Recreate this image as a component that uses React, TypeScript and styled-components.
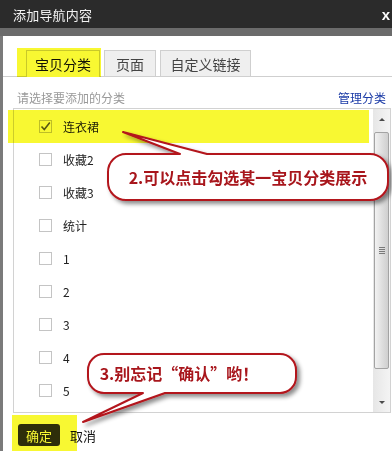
import React from "react";
import styled, { createGlobalStyle } from "styled-components";

const GlobalStyle = createGlobalStyle`
  html, body { margin: 0; padding: 0; background: #fff; }
  body { font-family: "Noto Sans CJK SC", "Noto Sans", "Liberation Sans", sans-serif; }
`;

const Frame = styled.div`
  position: relative;
  width: 392px;
  height: 451px;
  overflow: hidden;
  background: #7a7a7a;
  display: flex;
  flex-direction: column;
`;

const TitleBar = styled.div`
  height: 28px;
  flex: none;
  background: #2b2b2b;
  display: flex;
  align-items: center;
  justify-content: space-between;
  padding: 0 2px 0 13px;
  color: #f2f2f2;
`;

const Title = styled.span`
  font-size: 13px;
  letter-spacing: 0.2px;
`;

const Close = styled.span`
  font-family: "Liberation Sans", sans-serif;
  font-weight: bold;
  font-size: 15px;
  color: #fff;
  line-height: 1;
  margin-top: 1px;
`;

const SubBar = styled.div`
  height: 8px;
  flex: none;
  background: #6b6b6b;
`;

const Panel = styled.div`
  flex: 1;
  margin-left: 3px;
  background: #fff;
  display: flex;
  flex-direction: column;
  padding-top: 14px;
`;

const TabBar = styled.div`
  display: flex;
  gap: 4px;
  padding-left: 23px;
  border-bottom: 1px solid #cfcfcf;
  height: 26px;
`;

const Tab = styled.div<{ $active?: boolean; $w: number }>`
  width: ${(p) => p.$w}px;
  box-sizing: border-box;
  border: 1px solid #cfcfcf;
  border-bottom: none;
  background: ${(p) => (p.$active ? "#fff" : "#efefef")};
  color: ${(p) => (p.$active ? "#111" : "#444")};
  font-size: 14px;
  display: flex;
  align-items: center;
  justify-content: center;
  margin-bottom: ${(p) => (p.$active ? "-1px" : "0")};
  height: ${(p) => (p.$active ? "27px" : "26px")};
`;

const HintRow = styled.div`
  display: flex;
  justify-content: space-between;
  align-items: center;
  height: 17px;
  padding: 12px 6px 0 14px;
  margin-bottom: 2px;
  font-size: 12px;
`;

const Hint = styled.span`
  color: #999;
`;

const Manage = styled.span`
  color: #1a3aa6;
`;

const ListBox = styled.div`
  height: 305px;
  box-sizing: border-box;
  margin: 0 1px 0 10px;
  border: 1px solid #d2d2d2;
  display: flex;
`;

const List = styled.div`
  flex: 1;
  padding-top: 1px;
  display: flex;
  flex-direction: column;
`;

const Row = styled.div`
  height: 33px;
  flex: none;
  display: flex;
  align-items: center;
  gap: 11px;
  padding-left: 25px;
  font-size: 12px;
  color: #222;
`;

const Box = styled.span`
  width: 13px;
  height: 13px;
  box-sizing: border-box;
  border: 1px solid #c4c4c4;
  background: #fff;
  display: flex;
  align-items: center;
  justify-content: center;
`;

const Scrollbar = styled.div`
  width: 17px;
  flex: none;
  background: linear-gradient(to right, #e6e6e6, #f4f4f4);
  display: flex;
  flex-direction: column;
  align-items: center;
`;

const Arrow = styled.div<{ $down?: boolean }>`
  height: 20px;
  width: 17px;
  display: flex;
  align-items: center;
  justify-content: center;
  &::before {
    content: "";
    width: 0;
    height: 0;
    border-left: 3px solid transparent;
    border-right: 3px solid transparent;
    ${(p) =>
      p.$down ? "border-top: 3px solid #4a4a4a;" : "border-bottom: 3px solid #4a4a4a;"}
  }
`;

const Track = styled.div`
  flex: 1;
  width: 17px;
  display: flex;
  flex-direction: column;
  padding: 3px 0 20px;
  box-sizing: border-box;
`;

const Thumb = styled.div`
  height: 237px;
  width: 15px;
  margin-left: 1px;
  box-sizing: border-box;
  border: 1px solid #a3a3a3;
  border-radius: 2px;
  background: linear-gradient(to right, #f2f2f2, #dcdcdc 60%, #cfcfcf);
  display: flex;
  flex-direction: column;
  align-items: center;
  justify-content: center;
  gap: 1px;
`;

const Grip = styled.span`
  width: 6px;
  height: 1px;
  background: #7a7a7a;
`;

const Footer = styled.div`
  display: flex;
  align-items: center;
  gap: 10px;
  padding: 11px 0 0 15px;
`;

const OkButton = styled.div`
  width: 42px;
  height: 22px;
  border-radius: 3px;
  background: #2f2f2f;
  color: #fff;
  font-size: 13px;
  display: flex;
  align-items: center;
  justify-content: center;
`;

const Cancel = styled.span`
  font-size: 13px;
  color: #111;
`;

const Highlight = styled.div<{ $x: number; $y: number; $w: number; $h: number }>`
  position: absolute;
  left: ${(p) => p.$x}px;
  top: ${(p) => p.$y}px;
  width: ${(p) => p.$w}px;
  height: ${(p) => p.$h}px;
  background: #f8f832;
  mix-blend-mode: multiply;
  pointer-events: none;
`;

const Overlay = styled.svg`
  position: absolute;
  left: 0;
  top: 0;
  pointer-events: none;
`;

const CalloutText = styled.div<{ $x: number; $y: number; $w: number; $h: number }>`
  position: absolute;
  left: ${(p) => p.$x}px;
  top: ${(p) => p.$y}px;
  width: ${(p) => p.$w}px;
  height: ${(p) => p.$h}px;
  display: flex;
  align-items: center;
  justify-content: center;
  font-weight: bold;
  font-size: 16px;
  color: #a8161c;
  white-space: nowrap;
`;

const items = ["连衣裙", "收藏2", "收藏3", "统计", "1", "2", "3", "4", "5"];

export default function App() {
  return (
    <>
      <GlobalStyle />
      <Frame>
        <TitleBar>
          <Title>添加导航内容</Title>
          <Close>x</Close>
        </TitleBar>
        <SubBar />
        <Panel>
          <TabBar>
            <Tab $active $w={74}>宝贝分类</Tab>
            <Tab $w={52}>页面</Tab>
            <Tab $w={91}>自定义链接</Tab>
          </TabBar>
          <HintRow>
            <Hint>请选择要添加的分类</Hint>
            <Manage>管理分类</Manage>
          </HintRow>
          <ListBox>
            <List>
              {items.map((t, i) => (
                <Row key={t + i}>
                  <Box>
                    {i === 0 && (
                      <svg width="11" height="11" viewBox="0 0 11 11">
                        <path d="M1.5 5.5 L4.3 8.5 L9.8 1.5" fill="none" stroke="#5a5a5a" strokeWidth="1.6" />
                      </svg>
                    )}
                  </Box>
                  <span>{t}</span>
                </Row>
              ))}
            </List>
            <Scrollbar>
              <Arrow />
              <Track>
                <Thumb>
                  <Grip />
                  <Grip />
                  <Grip />
                  <Grip />
                </Thumb>
              </Track>
              <Arrow $down />
            </Scrollbar>
          </ListBox>
          <Footer>
            <OkButton>确定</OkButton>
            <Cancel>取消</Cancel>
          </Footer>
        </Panel>

        <Highlight $x={17} $y={48} $w={84} $h={29} />
        <Highlight $x={8} $y={110} $w={361} $h={33} />
        <Highlight $x={12} $y={415} $w={65} $h={36} />

        <Overlay width="392" height="451" viewBox="0 0 392 451">
          <defs>
            <filter id="sh" x="-10%" y="-30%" width="130%" height="170%">
              <feDropShadow dx="3" dy="3" stdDeviation="2" floodColor="#000" floodOpacity="0.45" />
            </filter>
          </defs>
          <path
            d="M126 154 L180 154 L123 132 L207 154 L370 154 A18 18 0 0 1 388 172 L388 182 A18 18 0 0 1 370 200 L126 200 A18 18 0 0 1 108 182 L108 172 A18 18 0 0 1 126 154 Z"
            fill="#fff"
            stroke="#b3141c"
            strokeWidth="2"
            strokeLinejoin="round"
            filter="url(#sh)"
          />
          <path
            d="M104 354 L280 354 A16 16 0 0 1 296 370 L296 377 A16 16 0 0 1 280 393 L165 393 L83 422 L143 393 L104 393 A16 16 0 0 1 88 377 L88 370 A16 16 0 0 1 104 354 Z"
            fill="#fff"
            stroke="#b3141c"
            strokeWidth="2"
            strokeLinejoin="round"
            filter="url(#sh)"
          />
        </Overlay>
        <CalloutText $x={108} $y={154} $w={280} $h={46}>2.可以点击勾选某一宝贝分类展示</CalloutText>
        <CalloutText $x={96} $y={354} $w={166} $h={37}>3.别忘记“确认”哟！</CalloutText>
      </Frame>
    </>
  );
}
